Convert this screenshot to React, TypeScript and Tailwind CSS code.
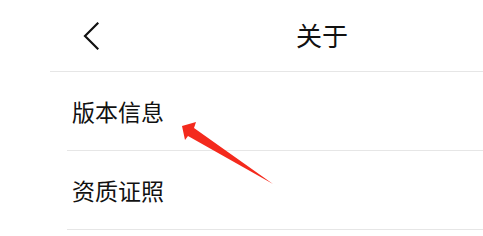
import React from "react";

export default function App() {
  const font = { fontFamily: '"Noto Sans CJK SC", "Noto Sans", sans-serif' };
  return (
    <div className="relative w-[483px] h-[236px] bg-white overflow-hidden text-[#111]" style={font}>
      <div className="ml-[50px] h-[72px] border-b border-[#e6e6e6] flex items-center">
        <div className="ml-[33px] w-[16px] h-[28px] flex items-center">
          <svg width="16" height="28" viewBox="0 0 16 28" fill="none">
            <path d="M14.5 1.5 L2 14 L14.5 26.5" stroke="#111" strokeWidth="2.2" strokeLinecap="square" strokeLinejoin="miter" />
          </svg>
        </div>
        <div className="ml-[197px] text-[26px] leading-none pb-[2px]">关于</div>
      </div>
      <div className="ml-[67px]">
        <div className="h-[79px] border-b border-[#e6e6e6] flex items-center">
          <span className="ml-[5px] text-[23px] leading-none">版本信息</span>
        </div>
        <div className="h-[79px] border-b border-[#e6e6e6] flex items-center">
          <span className="ml-[5px] text-[23px] leading-none">资质证照</span>
        </div>
      </div>
      <svg className="absolute left-0 top-0" width="483" height="236" viewBox="0 0 483 236">
        <polygon points="182,126 196,122 194,128 273,184 188,136 185,140" fill="#f42a1d" />
      </svg>
    </div>
  );
}
